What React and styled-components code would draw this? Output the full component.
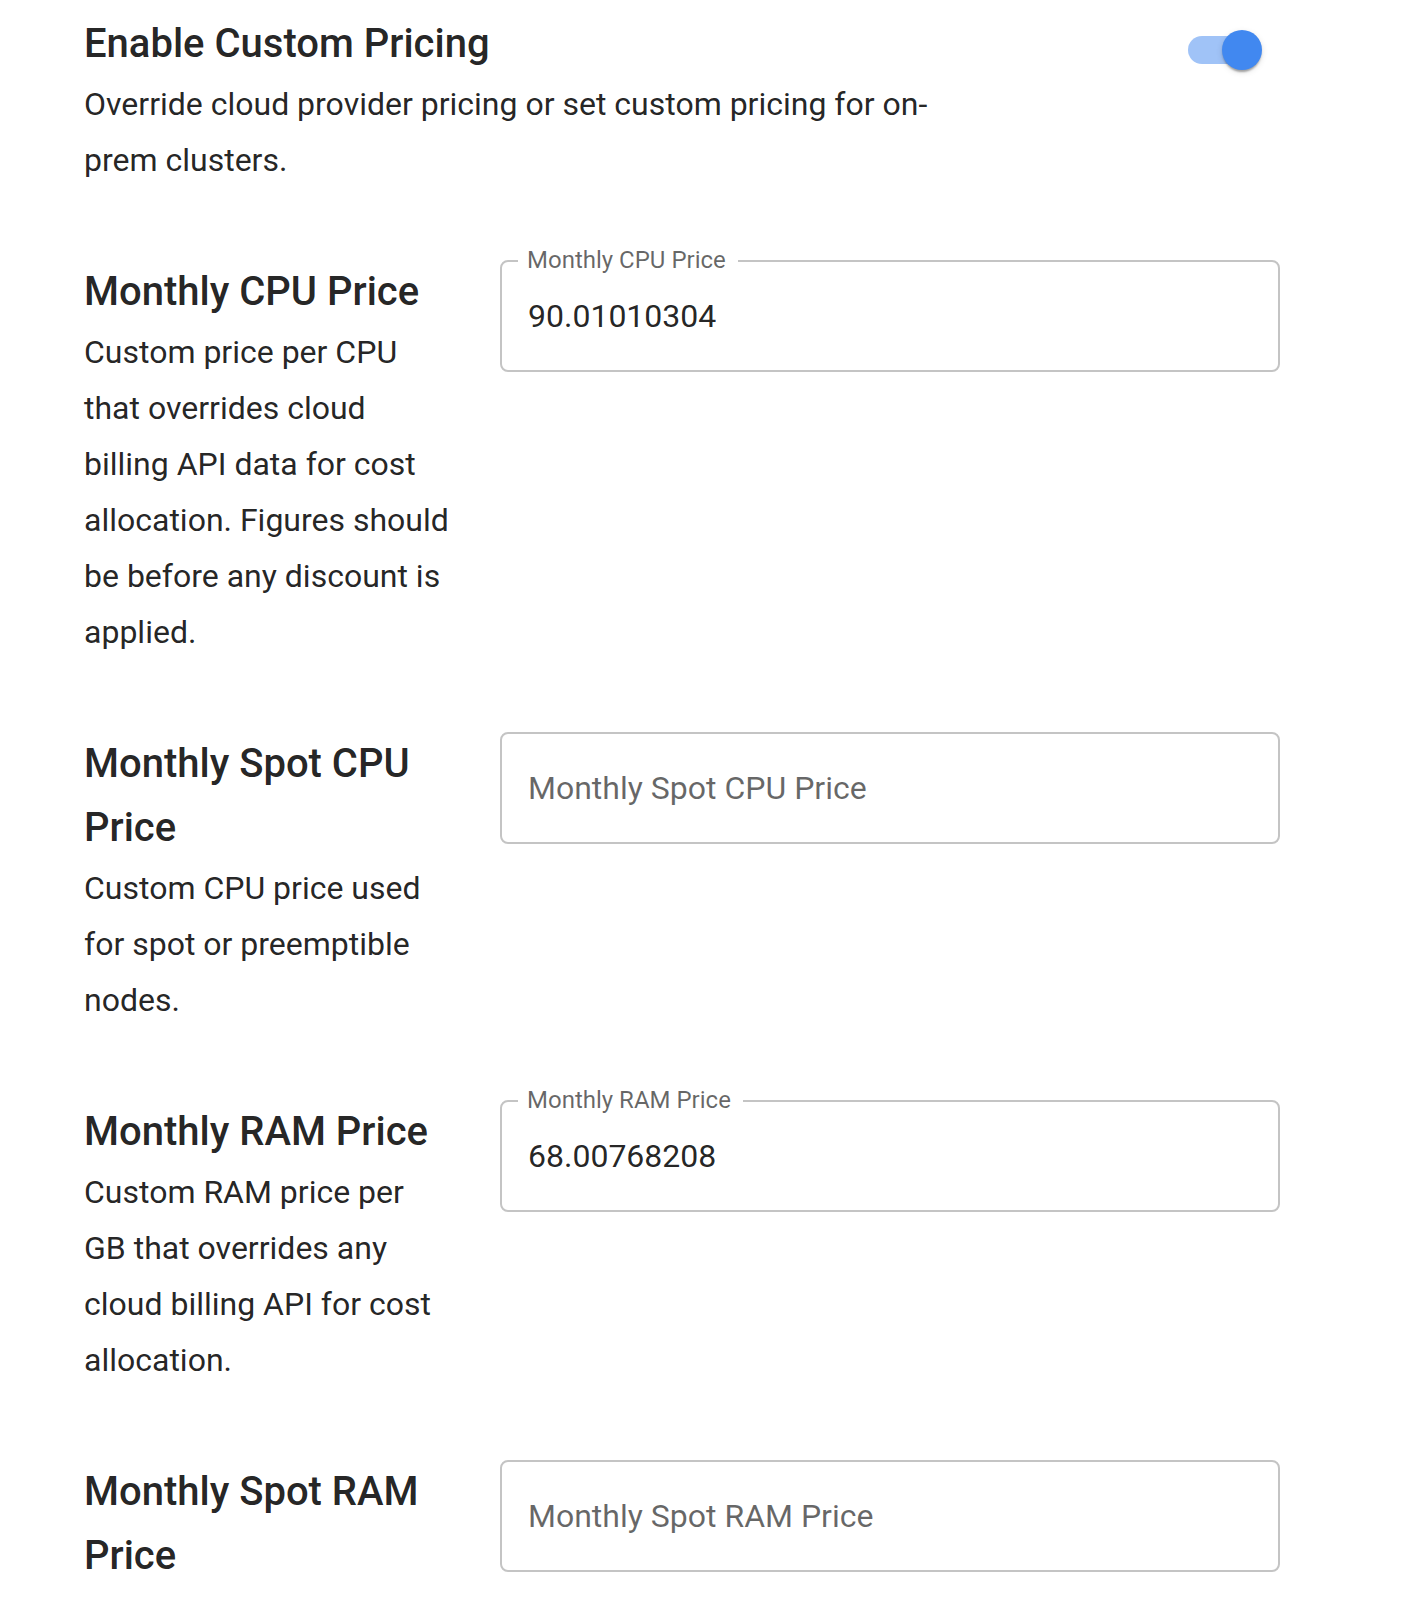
import React, { useState } from "react";
import styled, { createGlobalStyle } from "styled-components";

const GlobalStyle = createGlobalStyle`
  html, body {
    margin: 0;
    background: #ffffff;
  }
  body {
    font-family: Roboto, "Noto Sans", "Liberation Sans", Arial, sans-serif;
    color: rgba(0, 0, 0, 0.87);
    -webkit-font-smoothing: antialiased;
  }
  * { box-sizing: border-box; }
`;

const Page = styled.main`
  display: flex;
  flex-direction: column;
  gap: 72px;
  padding: 12px 124px 0 84px;
`;

const Header = styled.section`
  display: flex;
  justify-content: space-between;
  align-items: flex-start;
`;

const HeaderText = styled.div`
  max-width: 880px;
`;

const Title = styled.h2`
  margin: 0;
  font-size: 40px;
  font-weight: 500;
  line-height: 64px;
  color: rgba(0, 0, 0, 0.87);
`;

const Description = styled.p`
  margin: 0;
  font-size: 32px;
  font-weight: 400;
  line-height: 56px;
  color: rgba(0, 0, 0, 0.87);
`;

const SwitchRoot = styled.button`
  position: relative;
  display: inline-flex;
  flex-shrink: 0;
  width: 116px;
  height: 76px;
  padding: 24px;
  margin: 0;
  border: 0;
  background: transparent;
  cursor: pointer;
`;

const Track = styled.span`
  display: block;
  width: 100%;
  height: 100%;
  border-radius: 14px;
  background: ${(p) => (p.$on ? "#4188f0" : "#000000")};
  opacity: ${(p) => (p.$on ? 0.5 : 0.38)};
`;

const Thumb = styled.span`
  position: absolute;
  top: 18px;
  left: ${(p) => (p.$on ? "58px" : "18px")};
  width: 40px;
  height: 40px;
  border-radius: 50%;
  background: ${(p) => (p.$on ? "#4188f0" : "#fafafa")};
  box-shadow: 0 4px 2px -2px rgba(0, 0, 0, 0.2), 0 2px 2px 0 rgba(0, 0, 0, 0.14),
    0 2px 6px 0 rgba(0, 0, 0, 0.12);
  transition: left 150ms ease;
`;

const Row = styled.section`
  display: grid;
  grid-template-columns: 369px 1fr;
  column-gap: 47px;
  align-items: start;
`;

const RowText = styled.div`
  min-width: 0;
`;

const Field = styled.fieldset`
  margin: 0;
  padding: 0;
  min-width: 0;
  border: 2px solid #c4c4c4;
  border-radius: 8px;
`;

const Legend = styled.legend`
  margin-left: 16px;
  padding: 0 12px 0 9px;
  font-size: 24px;
  line-height: 2px;
  color: rgba(0, 0, 0, 0.6);
  white-space: nowrap;
  transform: translateY(-1px);
`;

const Input = styled.input`
  display: block;
  width: 100%;
  height: 108px;
  padding: 0 26px;
  border: 0;
  outline: 0;
  background: transparent;
  font-family: Roboto, "Noto Sans", "Liberation Sans", Arial, sans-serif;
  font-size: 32px;
  font-weight: 400;
  color: rgba(0, 0, 0, 0.87);

  &::placeholder {
    color: rgba(0, 0, 0, 0.6);
    opacity: 1;
  }
`;

const rows = [
  {
    title: "Monthly CPU Price",
    text: "Custom price per CPU that overrides cloud billing API data for cost allocation. Figures should be before any discount is applied.",
    label: "Monthly CPU Price",
    value: "90.01010304",
  },
  {
    title: "Monthly Spot CPU Price",
    text: "Custom CPU price used for spot or preemptible nodes.",
    label: "Monthly Spot CPU Price",
    value: "",
  },
  {
    title: "Monthly RAM Price",
    text: "Custom RAM price per GB that overrides any cloud billing API for cost allocation.",
    label: "Monthly RAM Price",
    value: "68.00768208",
  },
  {
    title: "Monthly Spot RAM Price",
    text: null,
    label: "Monthly Spot RAM Price",
    value: "",
  },
];

function PriceField({ label, value }) {
  const [val, setVal] = useState(value);
  const filled = val !== "";
  return (
    <Field>
      {filled && <Legend>{label}</Legend>}
      <Input
        type="text"
        value={val}
        placeholder={label}
        aria-label={label}
        onChange={(e) => setVal(e.target.value)}
      />
    </Field>
  );
}

export default function App() {
  const [enabled, setEnabled] = useState(true);
  return (
    <>
      <GlobalStyle />
      <Page>
        <Header>
          <HeaderText>
            <Title>Enable Custom Pricing</Title>
            <Description>
              Override cloud provider pricing or set custom pricing for on-prem clusters.
            </Description>
          </HeaderText>
          <SwitchRoot
            role="switch"
            aria-checked={enabled}
            aria-label="Enable Custom Pricing"
            onClick={() => setEnabled((v) => !v)}
          >
            <Track $on={enabled} />
            <Thumb $on={enabled} />
          </SwitchRoot>
        </Header>
        {rows.map((r) => (
          <Row key={r.title}>
            <RowText>
              <Title>{r.title}</Title>
              {r.text && <Description>{r.text}</Description>}
            </RowText>
            <PriceField label={r.label} value={r.value} />
          </Row>
        ))}
      </Page>
    </>
  );
}
